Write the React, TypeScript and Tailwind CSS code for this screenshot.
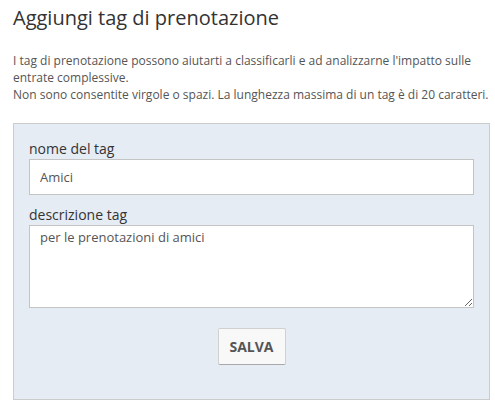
export default function App() {
  return (
    <div
      className="w-[495px] h-[405px] bg-white pl-[13px] pr-[5px] pt-[6px]"
      style={{ fontFamily: '"Open Sans", sans-serif' }}
    >
      <h1 className="text-[20px] leading-[24px] text-[#333] font-normal">
        Aggiungi tag di prenotazione
      </h1>
      <p className="mt-[22px] text-[12px] leading-[17px] text-[#555]">
        I tag di prenotazione possono aiutarti a classificarli e ad analizzarne l'impatto sulle entrate complessive.
        <br />
        Non sono consentite virgole o spazi. La lunghezza massima di un tag è di 20 caratteri.
      </p>
      <div className="mt-[20px] w-[477px] border border-[#cccccc] bg-[#e6ecf4] px-[15px] pt-[15px] pb-[34px]">
        <label className="block text-[14px] leading-[20px] text-[#333]">nome del tag</label>
        <input
          defaultValue="Amici"
          className="block w-full h-[36px] border border-[#c4c4c4] bg-white px-[10px] text-[13px] text-[#555] outline-none"
        />
        <label className="block mt-[10px] text-[14px] leading-[20px] text-[#333]">descrizione tag</label>
        <textarea
          defaultValue="per le prenotazioni di amici"
          className="block w-full h-[83px] border border-[#c4c4c4] bg-white px-[10px] pt-[2px] text-[13px] leading-[18px] text-[#555] outline-none"
        />
        <div className="mt-[20px] flex justify-center">
          <button className="w-[68px] h-[37px] border border-[#d0d0d0] border-b-[#a9a9a9] bg-[#f8f8f8] text-[14px] font-bold text-[#555] rounded-[2px]">
            SALVA
          </button>
        </div>
      </div>
    </div>
  );
}
